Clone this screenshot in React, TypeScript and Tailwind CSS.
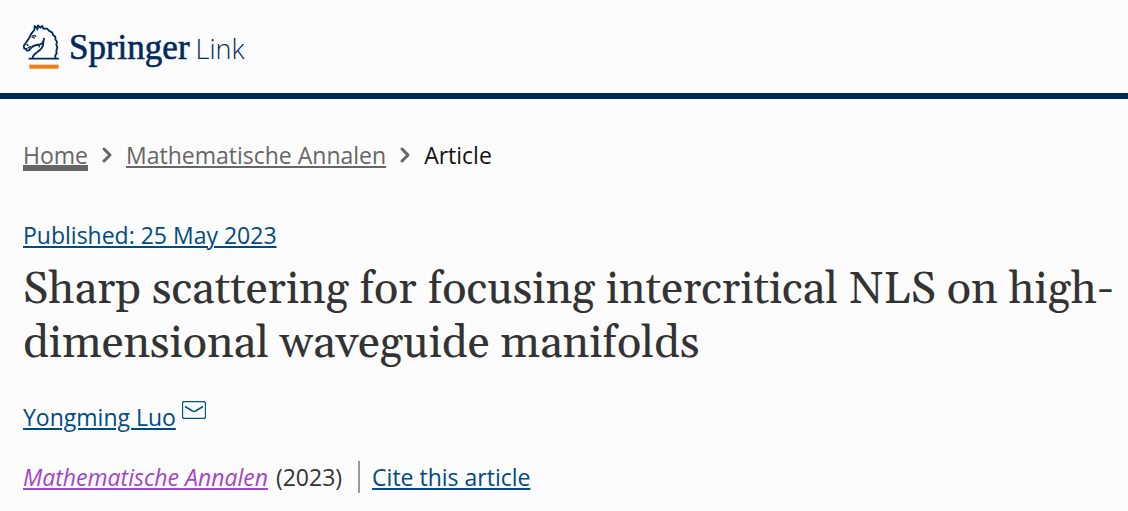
import { ChevronRight } from "lucide-react";

function HorseLogo() {
    return (
        <svg viewBox="0 0 108 135" className="h-[45px] w-9 shrink-0" fill="none" aria-hidden="true">
            <g stroke="#01295c" strokeWidth="5.5" strokeLinecap="round" strokeLinejoin="round">
                <path d="M19 104H106" />
                <path d="M43 13L35 6L34 18L25 29L18 43L10 55L2 66L4 74L10 75L11 80L18 79L22 74L31 66L41 63L52 61L60 56L63 44" />
                <path d="M61 54C61 70 54 76 43 84C34 90 29 96 28 103" />
                <path d="M43 17L45 4L52 11L58 6L61 14L72 14L79 21L88 26L90 33L97 38L97 46L102 53L100 62L103 71L100 80L101 88L97 94L97 103" />
                <path d="M29 35L38 36M27 39L34 42" strokeWidth="4" />
                <path d="M12 62L15 64M15 72L22 68" strokeWidth="4" />
                <path d="M44 61C49 61 50 64 48 69" strokeWidth="4" />
            </g>
            <path d="M19 122H107V134H19Z" fill="#f07f13" />
        </svg>
    );
}

function MailIcon() {
    return (
        <svg viewBox="0 0 24 18" className="h-[18px] w-6" fill="none" stroke="#01538a" role="img" aria-label="Email author">
            <rect x="0.5" y="0.5" width="23" height="17" rx="2" strokeWidth="1.3" />
            <path d="M3 5.5L10.5 10Q12 11 13.5 10L21 5.5" strokeWidth="1.5" />
        </svg>
    );
}

export default function App() {
    return (
        <div className="min-h-screen bg-[#fcfcfc] font-['Open_Sans',sans-serif] text-[23px] leading-8 text-[#333333]">
            <header className="border-b-6 border-[#01295c] px-[23px] pt-6 pb-6">
                <a href="#" aria-label="Springer Link" className="flex h-[45px] items-start text-[#01295c]">
                    <HorseLogo />
                    <span className="ml-[10px] flex items-baseline gap-[6px] leading-[48px]">
                        <span className="font-['Liberation_Serif',serif] text-[35px] font-medium [-webkit-text-stroke:0.6px]">Springer</span>
                        <span className="font-['Open_Sans',sans-serif] text-[27px] font-light">Link</span>
                    </span>
                </a>
            </header>

            <main className="pt-10 pr-3 pl-[23px]">
                <nav aria-label="Breadcrumb">
                    <ol className="flex items-center gap-[7px] text-[#666666]">
                        <li>
                            <a href="#" className="underline decoration-[6px] underline-offset-1">Home</a>
                        </li>
                        <ChevronRight className="size-6" strokeWidth={3} aria-hidden="true" />
                        <li>
                            <a href="#" className="underline decoration-2 underline-offset-2">Mathematische Annalen</a>
                        </li>
                        <ChevronRight className="size-6" strokeWidth={3} aria-hidden="true" />
                        <li className="text-[#111111]">Article</li>
                    </ol>
                </nav>

                <p className="mt-12">
                    <a href="#" className="text-[#004b83] underline decoration-2 underline-offset-2">Published: 25 May 2023</a>
                </p>

                <h1 className="mt-3 font-[Gelasio,Georgia,'Liberation_Serif',serif] text-[45px] leading-[54px]">
                    Sharp scattering for focusing intercritical NLS on high-dimensional waveguide manifolds
                </h1>

                <p className="mt-[30px] flex gap-[6px] text-[#004b83]">
                    <a href="#" className="underline decoration-2 underline-offset-2">Yongming Luo</a>
                    <a href="#"><MailIcon /></a>
                </p>

                <div className="mt-7 flex items-start">
                    <p>
                        <a href="#" className="text-[#a345c9] italic underline decoration-2 underline-offset-2">Mathematische Annalen</a>
                        <span className="ml-2">(2023)</span>
                    </p>
                    <p className="ml-4 border-l-2 border-[#999999] pl-3">
                        <a href="#" className="text-[#004b83] underline decoration-2 underline-offset-2">Cite this article</a>
                    </p>
                </div>
            </main>
        </div>
    );
}
